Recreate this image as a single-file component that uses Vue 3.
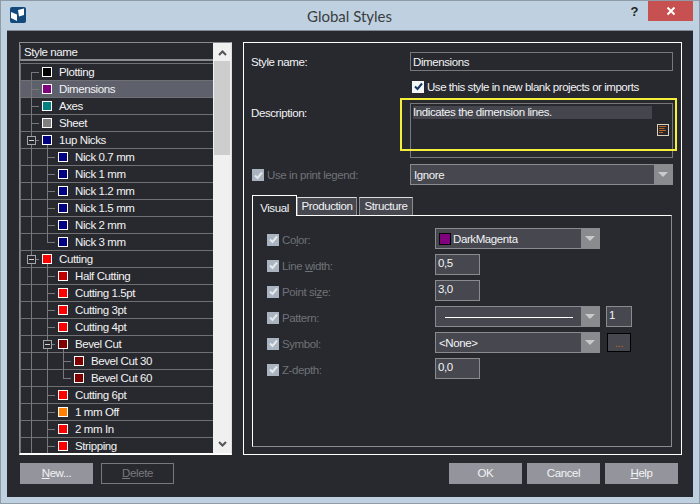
<script setup>
const rows = [
  { name: 'Plotting', color: '#000000', guides: ['first'] },
  { name: 'Dimensions', color: '#800080', guides: ['tee'], selected: true },
  { name: 'Axes', color: '#008080', guides: ['tee'] },
  { name: 'Sheet', color: '#808080', guides: ['tee'] },
  { name: '1up Nicks', color: '#000080', guides: ['box'], parent: true },
  { name: 'Nick 0.7 mm', color: '#000080', guides: ['v', 'tee'] },
  { name: 'Nick 1 mm', color: '#000080', guides: ['v', 'tee'] },
  { name: 'Nick 1.2 mm', color: '#000080', guides: ['v', 'tee'] },
  { name: 'Nick 1.5 mm', color: '#000080', guides: ['v', 'tee'] },
  { name: 'Nick 2 mm', color: '#000080', guides: ['v', 'tee'] },
  { name: 'Nick 3 mm', color: '#000080', guides: ['v', 'end'] },
  { name: 'Cutting', color: '#ff0000', guides: ['box'], parent: true },
  { name: 'Half Cutting', color: '#c00000', guides: ['v', 'tee'] },
  { name: 'Cutting 1.5pt', color: '#ff0000', guides: ['v', 'tee'] },
  { name: 'Cutting 3pt', color: '#ff0000', guides: ['v', 'tee'] },
  { name: 'Cutting 4pt', color: '#ff0000', guides: ['v', 'tee'] },
  { name: 'Bevel Cut', color: '#800000', guides: ['v', 'box'], parent: true },
  { name: 'Bevel Cut 30', color: '#800000', guides: ['v', 'v', 'tee'] },
  { name: 'Bevel Cut 60', color: '#800000', guides: ['v', 'v', 'end'] },
  { name: 'Cutting 6pt', color: '#ff0000', guides: ['v', 'tee'] },
  { name: '1 mm Off', color: '#ff8000', guides: ['v', 'tee'] },
  { name: '2 mm In', color: '#ff0000', guides: ['v', 'tee'] },
  { name: 'Stripping', color: '#ff0000', guides: ['v', 'tee'] },
];
</script>

<template>
  <div class="window">
    <div class="titlebar">
      <svg class="logo" width="16" height="16" viewBox="0 0 16 16">
        <rect width="16" height="16" rx="2" fill="#14497c" />
        <path d="M1 5 L7 7.5 V14 L1 11 Z" fill="#fff" />
        <path d="M8 3 L14 1.5 V8 L9 9.5 Z" fill="#fff" />
      </svg>
      <span class="title">Global Styles</span>
      <span class="help">?</span>
      <div class="close">
        <svg width="10" height="10" viewBox="0 0 10 10">
          <path d="M1.5 1.5 L8.5 8.5 M8.5 1.5 L1.5 8.5" stroke="#fff" stroke-width="2" />
        </svg>
      </div>
    </div>

    <div class="body">
      <div class="main">
        <div class="listbox">
          <div class="list">
            <div class="list-head">Style name</div>
            <div class="tree">
              <div v-for="row in rows" :key="row.name" class="row" :class="{ selected: row.selected }">
                <span v-for="(g, i) in row.guides" :key="i" class="guide" :class="g">
                  <span v-if="g === 'box'" class="expander"></span>
                </span>
                <span class="swatch" :class="{ parent: row.parent }" :style="{ background: row.color }"></span>
                <span class="row-name">{{ row.name }}</span>
              </div>
            </div>
          </div>
          <div class="scrollbar">
            <svg class="chev" width="9" height="6" viewBox="0 0 9 6">
              <path d="M1 5 L4.5 1.5 L8 5" fill="none" stroke="#555" stroke-width="2" />
            </svg>
            <div class="thumb"></div>
            <svg class="chev bottom" width="9" height="6" viewBox="0 0 9 6">
              <path d="M1 1 L4.5 4.5 L8 1" fill="none" stroke="#555" stroke-width="2" />
            </svg>
          </div>
        </div>

        <div class="details">
          <div class="form">
            <label class="lbl name-lbl">Style name:</label>
            <div class="input name-input">Dimensions</div>

            <div class="check-line">
              <span class="check on">
                <svg width="11" height="11" viewBox="0 0 11 11">
                  <path d="M2 5.5 L4.5 8 L9 2.5" fill="none" stroke="#14395f" stroke-width="2" />
                </svg>
              </span>
              <span class="check-text">Use this style in new blank projects or imports</span>
            </div>

            <label class="lbl desc-lbl">Description:</label>
            <div class="desc">
              <div class="desc-text">Indicates the dimension lines.</div>
              <svg class="note" width="12" height="12" viewBox="0 0 12 12">
                <rect x="0.5" y="0.5" width="11" height="11" fill="#28292e" stroke="#d8d2bc" />
                <path d="M2 2.5 H9 M2 4.5 H7.5 M2 6.5 H9 M2 8.5 H6" stroke="#b8651f" />
              </svg>
              <div class="highlight"></div>
            </div>

            <div class="legend-lbl">
              <span class="check off">
                <svg width="11" height="11" viewBox="0 0 11 11">
                  <path d="M2 5.5 L4.5 8 L9 2.5" fill="none" stroke="#e4e8ec" stroke-width="2" />
                </svg>
              </span>
              <span>Use in print legend:</span>
            </div>
            <div class="select legend-select">
              <span class="select-val">Ignore</span>
              <span class="arrow"><i></i></span>
            </div>
          </div>

          <div class="tabs">
            <div class="tab active">Visual</div>
            <div class="tab production">Production</div>
            <div class="tab structure">Structure</div>
          </div>
          <div class="tab-panel">
            <div class="prop">
              <div class="prop-lbl">
                <span class="check off"><svg width="11" height="11" viewBox="0 0 11 11"><path d="M2 5.5 L4.5 8 L9 2.5" fill="none" stroke="#e4e8ec" stroke-width="2" /></svg></span>
                <span>Co<u>l</u>or:</span>
              </div>
              <div class="select wide">
                <span class="select-val color-val"><i class="color-box"></i>DarkMagenta</span>
                <span class="arrow"><i></i></span>
              </div>
            </div>
            <div class="prop">
              <div class="prop-lbl">
                <span class="check off"><svg width="11" height="11" viewBox="0 0 11 11"><path d="M2 5.5 L4.5 8 L9 2.5" fill="none" stroke="#e4e8ec" stroke-width="2" /></svg></span>
                <span>Line <u>w</u>idth:</span>
              </div>
              <div class="num">0,5</div>
            </div>
            <div class="prop">
              <div class="prop-lbl">
                <span class="check off"><svg width="11" height="11" viewBox="0 0 11 11"><path d="M2 5.5 L4.5 8 L9 2.5" fill="none" stroke="#e4e8ec" stroke-width="2" /></svg></span>
                <span>Point si<u>z</u>e:</span>
              </div>
              <div class="num">3,0</div>
            </div>
            <div class="prop">
              <div class="prop-lbl">
                <span class="check off"><svg width="11" height="11" viewBox="0 0 11 11"><path d="M2 5.5 L4.5 8 L9 2.5" fill="none" stroke="#e4e8ec" stroke-width="2" /></svg></span>
                <span>Pattern:</span>
              </div>
              <div class="select wide">
                <span class="select-val"><i class="pattern-line"></i></span>
                <span class="arrow"><i></i></span>
              </div>
              <div class="num small">1</div>
            </div>
            <div class="prop">
              <div class="prop-lbl">
                <span class="check off"><svg width="11" height="11" viewBox="0 0 11 11"><path d="M2 5.5 L4.5 8 L9 2.5" fill="none" stroke="#e4e8ec" stroke-width="2" /></svg></span>
                <span>Symbol:</span>
              </div>
              <div class="select wide">
                <span class="select-val">&lt;None&gt;</span>
                <span class="arrow"><i></i></span>
              </div>
              <div class="dots">...</div>
            </div>
            <div class="prop">
              <div class="prop-lbl">
                <span class="check off"><svg width="11" height="11" viewBox="0 0 11 11"><path d="M2 5.5 L4.5 8 L9 2.5" fill="none" stroke="#e4e8ec" stroke-width="2" /></svg></span>
                <span>Z-depth:</span>
              </div>
              <div class="num">0,0</div>
            </div>
          </div>
        </div>
      </div>

      <div class="footer">
        <div class="btn"><u>N</u>ew...</div>
        <div class="btn disabled"><u>D</u>elete</div>
        <div class="spacer"></div>
        <div class="btn">OK</div>
        <div class="btn">Cancel</div>
        <div class="btn"><u>H</u>elp</div>
      </div>
    </div>
  </div>
</template>

<style>
html,
body {
  margin: 0;
  background: #bfd1e0;
}
</style>

<style scoped>
.window {
  width: 700px;
  height: 504px;
  box-sizing: border-box;
  background: #bfd1e0;
  border: 1px solid #8f9ba6;
  display: flex;
  flex-direction: column;
  font-family: "Liberation Sans", Arial, sans-serif;
  font-size: 11.5px;
  letter-spacing: -0.4px;
  color: #f2f3f5;
  overflow: hidden;
}

.titlebar {
  height: 29px;
  flex: none;
  display: flex;
  align-items: flex-start;
  position: relative;
}

.logo {
  margin: 6px 0 0 9px;
}

.title {
  position: absolute;
  left: 306px;
  top: 6px;
  font-family: Lato, sans-serif;
  font-size: 15px;
  letter-spacing: 0;
  color: #3a3d40;
}

.help {
  margin: 3px 0 0 auto;
  font-weight: bold;
  font-size: 13px;
  color: #222;
}

.close {
  width: 45px;
  height: 20px;
  margin: 0 6px 0 10px;
  background: #c75050;
  display: flex;
  align-items: center;
  justify-content: center;
}

.body {
  flex: 1;
  margin: 0 6px 6px;
  padding: 11px 10px 0 12px;
  background: #28292e;
  border-top: 1px solid #7f8a94;
  display: flex;
  flex-direction: column;
}

.main {
  display: flex;
  gap: 11px;
  height: 413px;
}

.listbox {
  width: 213px;
  height: 413px;
  box-sizing: border-box;
  display: flex;
  border: 1px solid #8a8b8f;
  border-bottom: 2px solid #fff;
  border-right-color: #ddd;
}

.list {
  flex: 1;
  min-width: 0;
  overflow: hidden;
}

.list-head {
  height: 14px;
  margin-top: 2px;
  padding-left: 3px;
  line-height: 14px;
  border-left: 1px solid #6f7074;
  border-bottom: 2px solid #8a8b8f;
}

.tree {
  margin-top: 2px;
  border-top: 1px solid #6f7074;
}

.row {
  height: 16px;
  display: flex;
  align-items: center;
  padding-left: 10px;
  border-bottom: 1px solid #6f7074;
  border-left: 1px solid #6f7074;
  line-height: 16px;
}

.row.selected {
  background: #5e606b;
}

.guide {
  flex: none;
  width: 16px;
  height: 17px;
  margin-bottom: -1px;
  background-repeat: no-repeat;
  position: relative;
}

.guide.v {
  background-image: linear-gradient(#77787c, #77787c);
  background-size: 1px 100%;
}

.guide.tee,
.guide.box {
  background-image: linear-gradient(#77787c, #77787c), linear-gradient(#77787c, #77787c);
  background-size: 1px 100%, 8px 1px;
  background-position: 0 0, 0 8px;
}

.guide.end {
  background-image: linear-gradient(#77787c, #77787c), linear-gradient(#77787c, #77787c);
  background-size: 1px 9px, 8px 1px;
  background-position: 0 0, 0 8px;
}

.guide.first {
  background-image: linear-gradient(#77787c, #77787c), linear-gradient(#77787c, #77787c);
  background-size: 1px 9px, 8px 1px;
  background-position: 0 8px, 0 8px;
}

.expander {
  position: absolute;
  left: -4px;
  top: 4px;
  width: 9px;
  height: 9px;
  box-sizing: border-box;
  border: 1px solid #a4a5a9;
  background: linear-gradient(#d0d0d0, #d0d0d0) center / 5px 1px no-repeat #28292e;
}

.swatch {
  flex: none;
  width: 10px;
  height: 10px;
  margin-left: -5px;
  box-sizing: border-box;
  border: 1px solid #fff;
  position: relative;
}

.swatch.parent::after {
  content: "";
  position: absolute;
  left: 4px;
  top: 9px;
  width: 1px;
  height: 4px;
  background: #77787c;
}

.row-name {
  margin-left: 7px;
  white-space: nowrap;
}

.scrollbar {
  flex: none;
  width: 18px;
  background: #f0f0f0;
  display: flex;
  flex-direction: column;
  align-items: center;
}

.chev {
  margin-top: 7px;
  flex: none;
}

.thumb {
  width: 16px;
  height: 94px;
  margin-top: 5px;
  background: #cdcdcd;
}

.chev.bottom {
  margin-top: auto;
  margin-bottom: 6px;
}

.details {
  width: 439px;
  box-sizing: border-box;
  border: 1px solid #fff;
  padding: 9px 9px 0 8px;
  display: flex;
  flex-direction: column;
}

.form {
  display: grid;
  grid-template-columns: 158px 263px;
  grid-template-rows: 20px 31px 61px 22px;
  flex: none;
}

.lbl {
  line-height: 20px;
  margin-left: -1px;
}

.input {
  box-sizing: border-box;
  border: 1px solid #77787c;
  padding-left: 2px;
  line-height: 18px;
  height: 19px;
}

.check-line {
  grid-column: 2;
  display: flex;
  align-items: center;
  gap: 3px;
  padding: 0 0 0 2px;
  margin-top: -2px;
}

.check-text {
  letter-spacing: -0.46px;
}

.check {
  flex: none;
  width: 12px;
  height: 12px;
  display: flex;
  align-items: center;
  justify-content: center;
}

.check.on {
  background: #f4f6f8;
}

.check.off {
  background: #a9b4c0;
}

.desc-lbl {
  grid-column: 1;
  line-height: 18px;
  margin-top: 1px;
}

.desc {
  position: relative;
  height: 55px;
  box-sizing: border-box;
  border: 1px solid #77787c;
  padding: 2px;
}

.desc-text {
  height: 13px;
  line-height: 13px;
  background: #44454d;
  margin-right: 18px;
}

.note {
  position: absolute;
  right: 3px;
  top: 20px;
}

.highlight {
  position: absolute;
  left: -11px;
  top: -6px;
  width: 277px;
  height: 53px;
  box-sizing: border-box;
  border: 2px solid #f5ef3c;
}

.legend-lbl {
  display: flex;
  align-items: center;
  gap: 3px;
  color: #6f7277;
}

.select {
  display: flex;
  height: 21px;
  background: #46474f;
  box-sizing: border-box;
  border: 1px solid #8a8b8f;
}

.select-val {
  flex: 1;
  padding: 1px 0 0 3px;
  line-height: 18px;
  display: flex;
  align-items: center;
}

.arrow {
  flex: none;
  width: 18px;
  background: #8a8b8f;
  display: flex;
  align-items: center;
  justify-content: center;
}

.arrow i {
  width: 0;
  height: 0;
  border-left: 5px solid transparent;
  border-right: 5px solid transparent;
  border-top: 5px solid #c8cacc;
}

.tabs {
  display: flex;
  align-items: flex-end;
  margin-top: 9px;
  height: 20px;
  flex: none;
}

.tab {
  height: 18px;
  line-height: 16px;
  box-sizing: border-box;
  text-align: center;
  background: #46474f;
  border: 1px solid #8a8b8f;
  border-top-color: #ddd;
  border-bottom: none;
}

.tab.production {
  width: 60px;
  margin-right: 2px;
}

.tab.structure {
  width: 54px;
}

.tab.active {
  width: 45px;
  height: 21px;
  margin-bottom: -1px;
  padding-top: 4px;
  background: #28292e;
  border: 1px solid #fff;
  border-bottom: none;
  position: relative;
  z-index: 1;
}

.tab-panel {
  height: 232px;
  box-sizing: border-box;
  border: 1px solid #8a8b8f;
  border-top: 1px solid #fff;
  border-left: 1px solid #fff;
  padding: 12px 0 0 14px;
  display: flex;
  flex-direction: column;
}

.prop {
  height: 26px;
  display: flex;
  align-items: flex-start;
}

.prop-lbl {
  width: 168px;
  flex: none;
  height: 21px;
  padding-top: 2px;
  box-sizing: border-box;
  display: flex;
  align-items: center;
  gap: 3px;
  color: #6f7277;
}

.wide {
  width: 165px;
}

.color-val {
  gap: 2px;
}

.color-box {
  width: 12px;
  height: 12px;
  box-sizing: border-box;
  background: #800080;
  border: 1px solid #000;
}

.pattern-line {
  width: 128px;
  height: 1px;
  margin-left: 6px;
  background: #fff;
}

.num {
  width: 45px;
  height: 21px;
  box-sizing: border-box;
  background: #46474f;
  border: 1px solid #8a8b8f;
  padding-left: 2px;
  line-height: 16px;
}

.num.small {
  width: 26px;
  margin-left: 6px;
}

.dots {
  width: 24px;
  height: 19px;
  margin: 1px 0 0 7px;
  box-sizing: border-box;
  background: #46474f;
  border: 1px solid #000;
  text-align: center;
  line-height: 19px;
  color: #c0661c;
}

.footer {
  display: flex;
  gap: 5px;
  margin-top: 8px;
  padding: 0 5px 0 1px;
}

.btn {
  width: 73px;
  height: 21px;
  line-height: 21px;
  text-align: center;
  background: #94959c;
}

.btn.disabled {
  background: transparent;
  box-sizing: border-box;
  border: 1px solid #77787c;
  color: #77787c;
  line-height: 19px;
  margin-left: 3px;
}

.spacer {
  flex: 1;
}
</style>
